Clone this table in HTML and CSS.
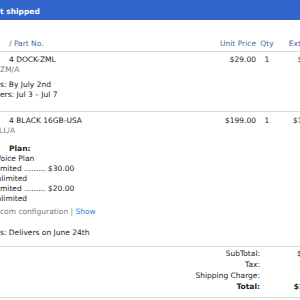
FILE: index.html
```html
<!DOCTYPE html>
<html>
<head>
    <meta charset="UTF-8"/>
    <title>Order items</title>
    <link rel="stylesheet" href="styles.css">
</head>
<body>
<div class="panel">
    <!-- Title bar -->
    <div class="panel-title">t shipped</div>

    <!-- Column headers -->
    <div class="row head">
        <div class="col-desc indent">/ Part No.</div>
        <div class="col-price">Unit Price</div>
        <div class="col-qty">Qty</div>
        <div class="col-ext">Ext. Price</div>
    </div>

    <!-- Item: dock -->
    <div class="row item item-first">
        <div class="col-desc">
            <div class="line indent">4 DOCK-ZML</div>
            <div class="line muted">ZM/A</div>
            <div class="group">
                <div class="line">s: By July 2nd</div>
                <div class="line">ers: Jul 3 – Jul 7</div>
            </div>
        </div>
        <div class="col-price">$29.00</div>
        <div class="col-qty">1</div>
        <div class="col-ext">$29.00</div>
    </div>

    <!-- Item: phone -->
    <div class="row item item-second">
        <div class="col-desc">
            <div class="line indent">4 BLACK 16GB-USA</div>
            <div class="line muted cut-1">LL/A</div>
            <div class="plan">
                <div class="line indent strong">Plan:</div>
                <div class="line cut-v">Voice Plan</div>
                <div class="line">mited ......... $30.00</div>
                <div class="line cut-n">nlimited</div>
                <div class="line">mited ......... $20.00</div>
                <div class="line cut-n">nlimited</div>
            </div>
            <div class="line config"><span class="muted">com configuration</span> <span class="muted">|</span> <a class="link">Show</a></div>
            <div class="line delivery">s: Delivers on June 24th</div>
        </div>
        <div class="col-price">$199.00</div>
        <div class="col-qty">1</div>
        <div class="col-ext">$199.00</div>
    </div>

    <!-- Totals -->
    <div class="totals">
        <div class="total-label">SubTotal:</div>
        <div class="total-value">$228.00</div>
        <div class="total-label">Tax:</div>
        <div class="total-value">$0.00</div>
        <div class="total-label">Shipping Charge:</div>
        <div class="total-value">$0.00</div>
        <div class="total-label strong">Total:</div>
        <div class="total-value strong">$228.00</div>
    </div>
</div>
</body>
</html>
```

FILE: styles.css
```css
html {
overflow: hidden;
}
body {
margin: 0;
width: 300px;
height: 300px;
overflow: hidden;
background-color: #fff;
font-family: "DejaVu Sans", sans-serif;
font-size: 7.5px;
line-height: 10px;
color: #222;
}
.panel {
width: 330px;
}
.panel-title {
height: 20px;
line-height: 23px;
background-color: #3366cc;
color: #fff;
font-weight: bold;
white-space: nowrap;
}
/* Shared column layout for header and item rows */
.row {
display: grid;
grid-template-columns: 196px 60px 22px 46px;
border-bottom: 1px solid #dadada;
white-space: nowrap;
}
.col-desc {
overflow: hidden;
}
.col-price {
text-align: right;
}
.col-qty {
text-align: center;
}
.col-ext {
text-align: right;
}
.head {
padding: 19px 0 2px;
color: #4a69a8;
}
.item-first {
padding: 3px 0 11px;
}
.item-second {
padding: 4px 0 8px;
}
.line {
height: 10px;
}
.indent {
padding-left: 9px;
}
.muted {
color: #7a7a7a;
}
.strong {
font-weight: bold;
}
.group {
margin-top: 5px;
}
.plan {
margin-top: 8px;
}
.cut-1 {
margin-left: -1px;
}
.cut-v {
margin-left: -4px;
}
.cut-n {
margin-left: -3.5px;
}
.config {
margin-top: 3px;
}
.link {
color: #3b7ad8;
}
.delivery {
margin-top: 11px;
}
/* Totals block */
.totals {
display: grid;
grid-template-columns: 260px 68px;
grid-auto-rows: 11px;
line-height: 11px;
padding: 1px 0 5px;
border-bottom: 1px solid #dadada;
white-space: nowrap;
}
.total-label {
text-align: right;
}
.total-value {
text-align: right;
}
```
